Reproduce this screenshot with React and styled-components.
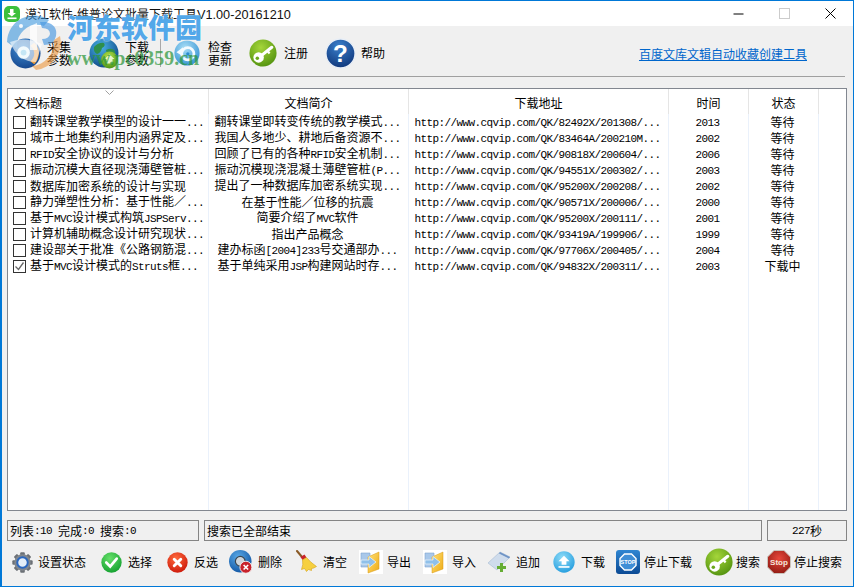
import React from 'react';
import styled, { createGlobalStyle } from 'styled-components';

const GlobalStyle = createGlobalStyle`
  html, body {
    margin: 0;
    padding: 0;
    background: #f0f0f0;
  }
`;

const CJK = `"Noto Sans CJK SC", "Liberation Sans", sans-serif`;

const Window = styled.div`
  position: relative;
  box-sizing: border-box;
  width: 854px;
  height: 587px;
  display: flex;
  flex-direction: column;
  overflow: hidden;
  background: #f0f0f0;
  border: 1px solid #0078d7;
  border-left-width: 2px;
  color: #000;
  font-family: ${CJK};
  font-size: 12px;
`;

const TitleBar = styled.div`
  height: 25px;
  flex: none;
  display: flex;
  align-items: center;
  background: #fff;
  padding-left: 2px;
`;

const TitleText = styled.span`
  margin-left: 5px;
  font-family: "Liberation Sans", ${CJK};
  font-size: 12px;
  color: #111;
`;

const TitleVersion = styled.span`
  font-size: 12.7px;
`;

const WindowButtons = styled.div`
  margin-left: auto;
  display: flex;
`;

const WindowButton = styled.div`
  width: 46px;
  height: 25px;
  display: flex;
  align-items: center;
  justify-content: center;
`;

const TopBar = styled.div`
  height: 50px;
  flex: none;
  box-sizing: border-box;
  padding: 4px 46px 0 8px;
  display: flex;
  align-items: center;
`;

const Tool = styled.div`
  width: ${props => props.$width}px;
  flex: none;
  display: flex;
  align-items: center;
`;

const IconCell = styled.div`
  width: ${props => props.$width}px;
  flex: none;
  display: flex;
  align-items: center;
`;

const ToolLabel = styled.span`
  line-height: 13.5px;
  width: 26px;
  flex: none;
  white-space: ${props => (props.$wide ? 'nowrap' : 'pre-line')};
`;

const BarSeparator = styled.div`
  width: 1px;
  height: 28px;
  flex: none;
  margin-right: 13px;
  background: #a9a9a9;
`;

const BarLink = styled.a`
  margin-left: auto;
  color: #0066cc;
  text-decoration: underline;
  cursor: pointer;
`;

const Divider = styled.div`
  height: 1px;
  flex: none;
  margin: 0 8px 0 5px;
  background: #a0a0a0;
`;

const List = styled.div`
  position: relative;
  box-sizing: border-box;
  height: 423px;
  flex: none;
  margin: 11px 6px 0 5px;
  display: flex;
  background: #fff;
  border: 1px solid #828790;
`;

const Column = styled.div`
  box-sizing: border-box;
  width: ${props => props.$width}px;
  flex: none;
  border-right: 1px solid #eaf1fb;
`;

const HeaderCell = styled.div`
  box-sizing: border-box;
  height: 25px;
  margin-right: -1px;
  padding: 1px 0 0 ${props => (props.$left ? '6px' : '0')};
  display: flex;
  align-items: center;
  justify-content: ${props => (props.$left ? 'flex-start' : 'center')};
  border-right: 1px solid #e5e5e5;
`;

const SortCaret = styled.svg`
  position: absolute;
  left: 97px;
  top: 1px;
`;

const Cell = styled.div`
  box-sizing: border-box;
  height: 16px;
  line-height: 16px;
  display: flex;
  align-items: center;
  justify-content: ${props => (props.$left ? 'flex-start' : 'center')};
  padding: ${props => (props.$left ? '0 0 0 5px' : '0 2px 0 0')};
  white-space: pre;
`;

const CheckBox = styled.span`
  box-sizing: border-box;
  width: 13px;
  height: 13px;
  flex: none;
  margin-right: 4px;
  display: flex;
  align-items: center;
  justify-content: center;
  background: #fff;
  border: 1px solid #333;
`;

const Latin = styled.span`
  font-family: "Liberation Mono", monospace;
  font-size: 11px;
  letter-spacing: -0.6px;
`;

const StatusRow = styled.div`
  height: 21px;
  flex: none;
  margin: 9px 6px 0 5px;
  display: flex;
  gap: 5px;
`;

const StatusBox = styled.div`
  box-sizing: border-box;
  width: ${props => (props.$width ? `${props.$width}px` : 'auto')};
  flex: ${props => (props.$width ? 'none' : '1')};
  padding-left: ${props => (props.$center ? '0' : '2px')};
  display: flex;
  align-items: center;
  justify-content: ${props => (props.$center ? 'center' : 'flex-start')};
  border: 1px solid #858585;
  white-space: pre;
`;

const BottomBar = styled.div`
  flex: 1;
  box-sizing: border-box;
  padding: 0 0 3px 10px;
  display: flex;
  align-items: center;
`;

const Watermark = styled.div`
  position: absolute;
  left: 2px;
  top: 11px;
  width: 200px;
  height: 60px;
  pointer-events: none;
`;

const WatermarkLogo = styled.svg`
  position: absolute;
  left: 0;
  top: 0;
`;

const WatermarkName = styled.span`
  position: absolute;
  left: 63px;
  top: -4px;
  font-size: 27px;
  line-height: 38px;
  font-weight: 900;
  white-space: nowrap;
  color: rgba(52, 152, 230, 0.85);
  text-shadow: 0 0 2px #fff;
`;

const WatermarkUrl = styled.span`
  position: absolute;
  left: 63px;
  top: 35px;
  font-family: "Liberation Serif", serif;
  font-size: 20px;
  line-height: 22px;
  font-weight: bold;
  white-space: nowrap;
  color: rgba(46, 150, 60, 0.72);
`;

const Ball = ({ id, light, dark, size = 24, children }) => (
  <svg width={size} height={size} viewBox="0 0 32 32">
    <defs>
      <radialGradient id={id} cx="0.42" cy="0.3" r="0.8">
        <stop offset="0" stopColor={light} />
        <stop offset="1" stopColor={dark} />
      </radialGradient>
    </defs>
    <circle cx="16" cy="16" r="15.5" fill={`url(#${id})`} />
    {children}
  </svg>
);

const KeyIcon = ({ id, size }) => (
  <Ball id={id} light="#a5d63a" dark="#4c8c0c" size={size}>
    <path d="M14 19 L26 9.5" stroke="#fff" strokeWidth="3.6" strokeLinecap="round" />
    <path d="M21 13.5 l2.5 3" stroke="#fff" strokeWidth="2.6" />
    <circle cx="11" cy="21" r="6" fill="#fff" />
    <circle cx="9.5" cy="22" r="2" fill="#6aa81c" />
  </Ball>
);

const CollectIcon = () => (
  <Ball id="collect" light="#3f8fd6" dark="#123f86" size={31}>
    <path d="M25 5 a15 15 0 0 1 0 22 l-4 -3 a10 10 0 0 0 0 -16z" fill="#e89a3c" />
    <circle cx="14" cy="15" r="6.5" fill="#dff3fb" />
    <circle cx="14" cy="15" r="3" fill="#6cc0e6" />
  </Ball>
);

const GlobeIcon = () => (
  <svg width="30" height="31" viewBox="0 0 30 31">
    <defs>
      <radialGradient id="globe" cx="0.4" cy="0.3" r="0.8">
        <stop offset="0" stopColor="#49b3e8" />
        <stop offset="1" stopColor="#0a3f7d" />
      </radialGradient>
      <radialGradient id="globeHome" cx="0.45" cy="0.3" r="0.8">
        <stop offset="0" stopColor="#b5e04a" />
        <stop offset="1" stopColor="#3f8a10" />
      </radialGradient>
    </defs>
    <circle cx="15" cy="15" r="14.5" fill="url(#globe)" />
    <path d="M5 9 q5 -5 10 -4 q2 3 -2 5 q-1 5 -5 6 q-4 -2 -3 -7z M17 12 q6 -3 9 1 q1 5 -3 8 q-5 -2 -6 -9z" fill="#2f8f4c" />
    <circle cx="20.5" cy="22" r="8.5" fill="url(#globeHome)" />
    <path d="M20.5 16.5 l5 4.5 h-2 v4.5 h-6 v-4.5 h-2z" fill="#e9f6c8" />
  </svg>
);

const RefreshIcon = () => (
  <Ball id="refresh" light="#a9def6" dark="#2a8cd0" size={26}>
    <circle cx="17" cy="17" r="7.5" fill="none" stroke="#f4fbff" strokeWidth="3.4" />
    <path d="M3 15 l8 -6 v11z" fill="#f4fbff" />
    <circle cx="17" cy="17" r="2" fill="#2a8cd0" />
  </Ball>
);

const HelpIcon = () => (
  <svg width="31" height="31" viewBox="0 0 32 32">
    <defs>
      <radialGradient id="help" cx="0.45" cy="0.25" r="0.85">
        <stop offset="0" stopColor="#3a7fcb" />
        <stop offset="1" stopColor="#0b2f72" />
      </radialGradient>
    </defs>
    <circle cx="16" cy="16" r="15" fill="url(#help)" stroke="#e8eef6" strokeWidth="1.4" />
    <text x="16" y="25" textAnchor="middle" fontFamily="Liberation Sans" fontWeight="bold" fontSize="25" fill="#fff">?</text>
  </svg>
);

const GearIcon = () => (
  <svg width="21" height="21" viewBox="0 0 32 32">
    <g fill="#6b7076">
      {[0, 45, 90, 135].map(a => (
        <rect key={a} x="12.5" y="0.5" width="7" height="31" rx="1.5" transform={`rotate(${a} 16 16)`} />
      ))}
    </g>
    <circle cx="16" cy="16" r="12.5" fill="#82878d" />
    <circle cx="16" cy="16" r="8" fill="#e4eef8" stroke="#2b68c0" strokeWidth="3" />
  </svg>
);

const CheckIcon = () => (
  <Ball id="okBall" light="#66e06a" dark="#0c9a2a" size={21}>
    <path d="M8 16 l6 6 l10 -12" fill="none" stroke="#fff" strokeWidth="4" strokeLinecap="round" />
  </Ball>
);

const CrossIcon = () => (
  <Ball id="noBall" light="#ff6a3c" dark="#c81206" size={21}>
    <path d="M11 11 l10 10 M21 11 l-10 10" stroke="#fff" strokeWidth="4.4" strokeLinecap="round" />
  </Ball>
);

const DeleteIcon = () => (
  <svg width="24" height="24" viewBox="0 0 32 32">
    <defs>
      <radialGradient id="disc" cx="0.4" cy="0.3" r="0.8">
        <stop offset="0" stopColor="#58a8e6" />
        <stop offset="1" stopColor="#0c4f9e" />
      </radialGradient>
    </defs>
    <circle cx="15" cy="15" r="15" fill="url(#disc)" />
    <circle cx="15" cy="15" r="6.5" fill="#cfd6dc" stroke="#3b4650" strokeWidth="1.6" />
    <circle cx="22.5" cy="23" r="8" fill="#c8232c" stroke="#f3f3f3" strokeWidth="1.2" />
    <path d="M19.5 20 l6 6 M25.5 20 l-6 6" stroke="#fff" strokeWidth="2.2" />
  </svg>
);

const BroomIcon = () => (
  <svg width="23" height="24" viewBox="0 0 23 24">
    <path d="M2 1 l5 6" stroke="#8a5a26" strokeWidth="2" strokeLinecap="round" />
    <path d="M5.5 7 l4 -2.5 l2 3 l-4 2.5z" fill="#c8242a" />
    <path d="M7.5 10 l4 -2.5 q4 5 10 9 q-3 2 -5 2 l0 2 l-3 -1 l-2 2 l-2 -3 l-3 1 q2 -5 1 -10z" fill="#f6d040" stroke="#d3a21a" strokeWidth="0.6" />
  </svg>
);

const FolderIcon = ({ id }) => (
  <svg width="24" height="24" viewBox="0 0 24 24">
    <defs>
      <linearGradient id={id} x1="0" y1="0" x2="1" y2="1">
        <stop offset="0" stopColor="#ffe27a" />
        <stop offset="1" stopColor="#eeaa14" />
      </linearGradient>
    </defs>
    <rect width="24" height="24" fill="#fff" />
    <path d="M2 3 h9 v14 h-9z" fill="#a9c8ea" stroke="#7fa4d0" strokeWidth="0.6" />
    <path d="M9 7 l11 -5 v17 l-11 4z" fill={`url(#${id})`} stroke="#d99a14" strokeWidth="0.5" />
    <path d="M2 10 h8 v-3.5 l7 5.5 l-7 5.5 v-3.5 h-8z" fill="#8fc0ea" stroke="#fff" strokeWidth="0.6" />
  </svg>
);

const AddIcon = () => (
  <svg width="24" height="22" viewBox="0 0 24 22">
    <path d="M1 12 L13 1 L23 6 L10 19z" fill="#cfdcec" stroke="#a8bcd4" strokeWidth="0.6" />
    <path d="M13 1 L23 6 L22 7.5 L12 2.5z" fill="#6f94c6" />
    <path d="M10 15 h3 v-3 h3 v3 h3 v3 h-3 v3 h-3 v-3 h-3z" fill="#66ad34" />
  </svg>
);

const UploadIcon = () => (
  <Ball id="upBall" light="#8edcf8" dark="#1c98dc" size={22}>
    <path d="M16 7 l8 8 h-4.5 v5 h-7 v-5 h-4.5z" fill="#fff" />
    <rect x="8" y="22" width="16" height="2.4" fill="#fff" />
  </Ball>
);

const StopDownloadIcon = () => (
  <svg width="24" height="24" viewBox="0 0 24 24">
    <defs>
      <linearGradient id="stopBox" x1="0" y1="0" x2="0" y2="1">
        <stop offset="0" stopColor="#2f86d2" />
        <stop offset="1" stopColor="#0b4a94" />
      </linearGradient>
    </defs>
    <rect width="24" height="24" rx="3" fill="url(#stopBox)" />
    <path d="M8.5 4 h7 l4.5 4.5 v7 l-4.5 4.5 h-7 l-4.5 -4.5 v-7z" fill="#3f8ed6" stroke="#fff" strokeWidth="1.4" />
    <text x="12" y="14" textAnchor="middle" fontFamily="Liberation Sans" fontWeight="bold" fontSize="5.5" fill="#fff">STOP</text>
  </svg>
);

const StopIcon = () => (
  <svg width="24" height="24" viewBox="0 0 24 24">
    <defs>
      <radialGradient id="stopSign" cx="0.5" cy="0.35" r="0.7">
        <stop offset="0" stopColor="#e8483c" />
        <stop offset="1" stopColor="#8e1a12" />
      </radialGradient>
    </defs>
    <path d="M7 0.5 h10 l6.5 6.5 v10 l-6.5 6.5 h-10 l-6.5 -6.5 v-10z" fill="url(#stopSign)" stroke="#c9c3bb" strokeWidth="1" />
    <text x="12" y="14.5" textAnchor="middle" fontFamily="Liberation Sans" fontWeight="bold" fontSize="8" fill="#f4e6dc">Stop</text>
  </svg>
);

const AppIcon = () => (
  <svg width="16" height="16" viewBox="0 0 16 16">
    <rect width="16" height="16" rx="5" fill="#3cc03c" />
    <path d="M6 3 h3.5 v4 h2.5 l-4.2 3.6 l-4.2 -3.6 h2.4z" fill="#fff" />
    <rect x="3.5" y="11.5" width="9" height="1.6" fill="#fff" />
  </svg>
);

const topTools = [
  { label: '采集\n参数', icon: <CollectIcon />, width: 79, iconWidth: 37 },
  { label: '下载\n参数', icon: <GlobeIcon />, width: 71, iconWidth: 36 },
  { separator: true },
  { label: '检查\n更新', icon: <RefreshIcon />, width: 75, iconWidth: 34 },
  { label: '注册', icon: <KeyIcon id="keyTop" size={28} />, width: 76, iconWidth: 35 },
  { label: '帮助', icon: <HelpIcon />, width: 80, iconWidth: 36 }
];

const bottomTools = [
  { label: '设置状态', icon: <GearIcon />, width: 89, iconWidth: 26 },
  { label: '选择', icon: <CheckIcon />, width: 66, iconWidth: 27 },
  { label: '反选', icon: <CrossIcon />, width: 62, iconWidth: 27 },
  { label: '删除', icon: <DeleteIcon />, width: 66, iconWidth: 29 },
  { label: '清空', icon: <BroomIcon />, width: 64, iconWidth: 28 },
  { label: '导出', icon: <FolderIcon id="folderOut" />, width: 64, iconWidth: 28 },
  { label: '导入', icon: <FolderIcon id="folderIn" />, width: 64, iconWidth: 29 },
  { label: '追加', icon: <AddIcon />, width: 66, iconWidth: 29 },
  { label: '下载', icon: <UploadIcon />, width: 63, iconWidth: 28 },
  { label: '停止下载', icon: <StopDownloadIcon />, width: 89, iconWidth: 28 },
  { label: '搜索', icon: <KeyIcon id="keyBottom" size={28} />, width: 62, iconWidth: 31 },
  { label: '停止搜索', icon: <StopIcon />, width: 75, iconWidth: 27 }
];

const titles = [
  '翻转课堂教学模型的设计一一...',
  '城市土地集约利用内涵界定及...',
  'RFID安全协议的设计与分析',
  '振动沉模大直径现浇薄壁管桩...',
  '数据库加密系统的设计与实现',
  '静力弹塑性分析：基于性能／...',
  '基于MVC设计模式构筑JSPServ...',
  '计算机辅助概念设计研究现状...',
  '建设部关于批准《公路钢筋混...',
  '基于MVC设计模式的Struts框...'
];

const summaries = [
  '翻转课堂即转变传统的教学模式...',
  '我国人多地少、耕地后备资源不...',
  '回顾了已有的各种RFID安全机制...',
  '振动沉模现浇混凝土薄壁管桩(P...',
  '提出了一种数据库加密系统实现...',
  '在基于性能／位移的抗震',
  '简要介绍了MVC软件',
  '指出产品概念',
  '建办标函[2004]233号交通部办...',
  '基于单纯采用JSP构建网站时存...'
];

const urls = [
  '82492X/201308/...',
  '83464A/200210M...',
  '90818X/200604/...',
  '94551X/200302/...',
  '95200X/200208/...',
  '90571X/200006/...',
  '95200X/200111/...',
  '93419A/199906/...',
  '97706X/200405/...',
  '94832X/200311/...'
].map(tail => `http://www.cqvip.com/QK/${tail}`);

const years = ['2013', '2002', '2006', '2003', '2002', '2000', '2001', '1999', '2004', '2003'];
const states = ['等待', '等待', '等待', '等待', '等待', '等待', '等待', '等待', '等待', '下载中'];

const columns = [
  { title: '文档标题', width: 201, cells: titles, left: true },
  { title: '文档简介', width: 200, cells: summaries },
  { title: '下载地址', width: 260, cells: urls },
  { title: '时间', width: 80, cells: years },
  { title: '状态', width: 70, cells: states }
];

// half-width characters are 6px wide in the original font
const Mixed = ({ text }) =>
  text.split(/([\x20-\x7e]+)/).map((part, i) =>
    i % 2 ? <Latin key={i}>{part}</Latin> : part
  );

const renderTool = (tool, i) =>
  tool.separator ? (
    <BarSeparator key={i} />
  ) : (
    <Tool key={tool.label} $width={tool.width}>
      <IconCell $width={tool.iconWidth}>{tool.icon}</IconCell>
      <ToolLabel $wide={tool.label.length > 2 && !tool.label.includes('\n')}>{tool.label}</ToolLabel>
    </Tool>
  );

const App = () => (
  <Window>
    <GlobalStyle />
    <TitleBar>
      <AppIcon />
      <TitleText>
        漠江软件-维普论文批量下载工具<TitleVersion>V1.00-20161210</TitleVersion>
      </TitleText>
      <WindowButtons>
        <WindowButton>
          <svg width="11" height="11" viewBox="0 0 11 11">
            <path d="M0.5 6 H10.5" stroke="#000" />
          </svg>
        </WindowButton>
        <WindowButton>
          <svg width="11" height="11" viewBox="0 0 11 11">
            <rect x="0.5" y="0.5" width="10" height="10" fill="none" stroke="#ccc" />
          </svg>
        </WindowButton>
        <WindowButton>
          <svg width="11" height="11" viewBox="0 0 11 11">
            <path d="M0.5 0.5 L10.5 10.5 M10.5 0.5 L0.5 10.5" stroke="#000" />
          </svg>
        </WindowButton>
      </WindowButtons>
    </TitleBar>

    <TopBar>
      {topTools.map(renderTool)}
      <BarLink>百度文库文辑自动收藏创建工具</BarLink>
    </TopBar>
    <Divider />

    <List>
      {columns.map(col => (
        <Column key={col.title} $width={col.width}>
          <HeaderCell $left={col.left}>{col.title}</HeaderCell>
          {col.cells.map((text, i) => (
            <Cell key={i} $left={col.left}>
              {col.left && (
                <CheckBox>
                  {i === 9 && (
                    <svg width="11" height="11" viewBox="0 0 11 11">
                      <path d="M1.5 5.5 L4.5 8.5 L9.5 1.5" fill="none" stroke="#666" strokeWidth="1.3" />
                    </svg>
                  )}
                </CheckBox>
              )}
              <span>
                <Mixed text={text} />
              </span>
            </Cell>
          ))}
        </Column>
      ))}
      <SortCaret width="9" height="5" viewBox="0 0 9 5">
        <path d="M0.5 0.5 L4.5 4.5 L8.5 0.5" fill="none" stroke="#a0a0a0" />
      </SortCaret>
    </List>

    <StatusRow>
      <StatusBox $width={192}>
        <Mixed text="列表:10 完成:0 搜索:0" />
      </StatusBox>
      <StatusBox>搜索已全部结束</StatusBox>
      <StatusBox $width={80} $center>
        <Mixed text="227秒" />
      </StatusBox>
    </StatusRow>

    <BottomBar>{bottomTools.map(renderTool)}</BottomBar>

    <Watermark>
      <WatermarkLogo width="60" height="60" viewBox="0 0 60 60">
        <path d="M3 30 A27 27 0 0 1 45 8 L40 14 A20 20 0 0 0 14 38z" fill="rgba(60,150,220,0.6)" />
        <path d="M36 10 h6 q12 3 10 14 q-2 9 -12 9 l-2 -6 q7 0 8 -5 q0 -6 -8 -6z" fill="rgba(70,150,225,0.65)" />
        <path d="M26 14 l7 -3 v27 h-7z" fill="rgba(255,255,255,0.75)" />
        <path d="M56 24 A28 28 0 0 1 32 58 L28 54 A24 24 0 0 0 50 28z" fill="rgba(236,150,60,0.6)" />
        <path d="M6 30 Q20 24 38 32 L32 50 Q14 50 6 30z" fill="rgba(255,255,255,0.6)" />
        <circle cx="17" cy="14" r="2" fill="rgba(255,255,255,0.9)" />
      </WatermarkLogo>
      <WatermarkName>河东软件园</WatermarkName>
      <WatermarkUrl>www.pc0359.cn</WatermarkUrl>
    </Watermark>
  </Window>
);

export default App;
